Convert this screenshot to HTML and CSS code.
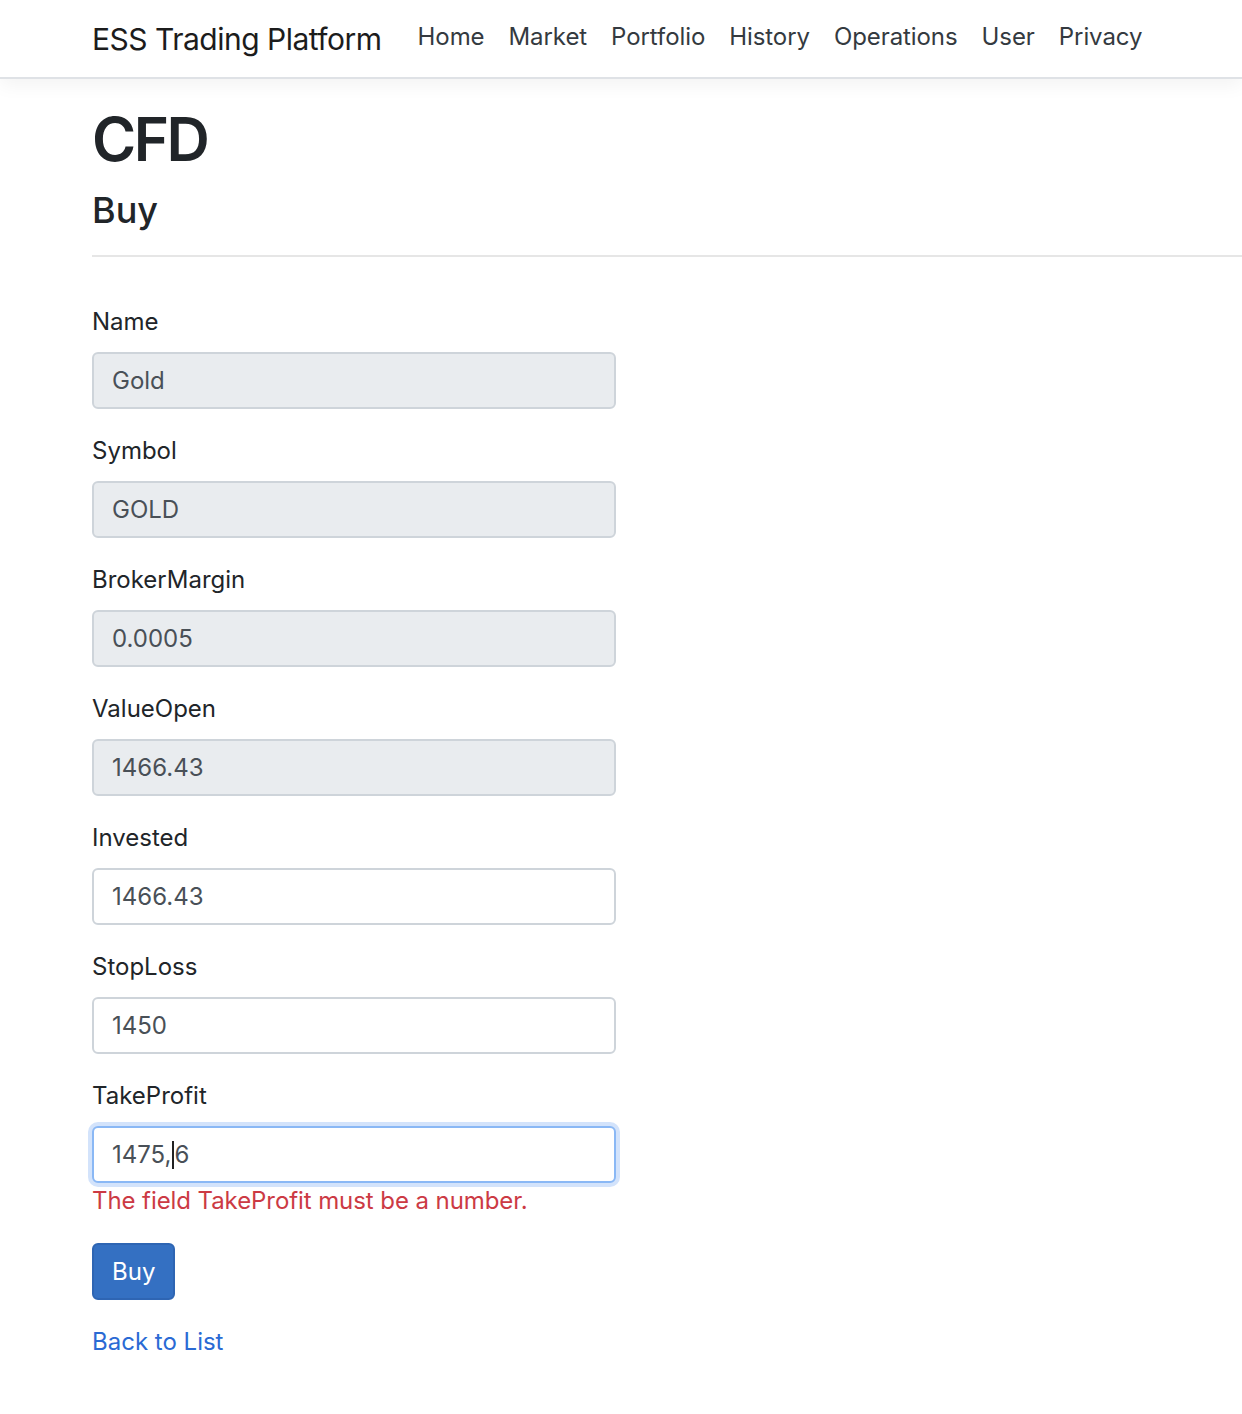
FILE: index.html
```html
<!DOCTYPE html>
<html lang="en">
<head>
<meta charset="utf-8">
<title>Buy - ESS Trading Platform</title>
<link rel="stylesheet" href="styles.css">
</head>
<body>
<header class="navbar">
  <div class="container nav-inner">
    <a class="brand" href="#">ESS Trading Platform</a>
    <nav class="nav-links">
      <a class="nav-link" href="#">Home</a>
      <a class="nav-link" href="#">Market</a>
      <a class="nav-link" href="#">Portfolio</a>
      <a class="nav-link" href="#">History</a>
      <a class="nav-link" href="#">Operations</a>
      <a class="nav-link" href="#">User</a>
      <a class="nav-link" href="#">Privacy</a>
    </nav>
  </div>
</header>
<main class="container main">
  <h1 class="title">CFD</h1>
  <h4 class="subtitle">Buy</h4>
  <hr class="divider">
  <form class="form">
    <div class="form-group">
      <label class="label">Name</label>
      <input class="form-control" type="text" value="Gold" readonly>
    </div>
    <div class="form-group">
      <label class="label">Symbol</label>
      <input class="form-control" type="text" value="GOLD" readonly>
    </div>
    <div class="form-group">
      <label class="label">BrokerMargin</label>
      <input class="form-control" type="text" value="0.0005" readonly>
    </div>
    <div class="form-group">
      <label class="label">ValueOpen</label>
      <input class="form-control" type="text" value="1466.43" readonly>
    </div>
    <div class="form-group">
      <label class="label">Invested</label>
      <input class="form-control editable" type="text" value="1466.43">
    </div>
    <div class="form-group">
      <label class="label">StopLoss</label>
      <input class="form-control editable" type="text" value="1450">
    </div>
    <div class="form-group">
      <label class="label">TakeProfit</label>
      <div class="form-control editable focused"><span>1475,</span><span class="caret"></span><span>6</span></div>
      <span class="text-danger">The field TakeProfit must be a number.</span>
    </div>
    <div class="form-group">
      <button class="btn-primary" type="button">Buy</button>
    </div>
  </form>
  <div class="back"><a class="link" href="#">Back to List</a></div>
</main>
</body>
</html>
```
FILE: styles.css
```css
* { box-sizing: border-box; }
html, body { margin: 0; padding: 0; }
body {
  font-family: "Inter", "Liberation Sans", sans-serif;
  font-size: 24px;
  line-height: 36px;
  color: #212529;
  background: #fff;
}
.container { padding-left: 92px; }
.navbar {
  height: 79px;
  border-bottom: 2px solid #dfe2e6;
  box-shadow: 0 6px 18px rgba(0,0,0,0.05);
  background: #fff;
}
.nav-inner {
  display: flex;
  align-items: center;
  height: 77px;
}
.brand {
  font-size: 30px;
  color: #1c1c1c;
  text-decoration: none;
  margin-right: 24px;
  letter-spacing: -0.5px;
}
.nav-links { display: flex; padding-bottom: 4px; }
.nav-link {
  padding: 0 12px;
  color: #343a40;
  text-decoration: none;
  letter-spacing: -0.08px;
}
.main { padding-top: 24px; }
.title {
  font-size: 60px;
  line-height: 72px;
  font-weight: 600;
  margin: 0 0 14px 0;
  letter-spacing: -2.5px;
}
.subtitle {
  font-size: 36px;
  line-height: 43px;
  font-weight: 500;
  margin: 0;
}
.divider {
  border: 0;
  border-top: 2px solid #e6e6e6;
  margin: 23px 0 47px 0;
}
.form { width: 524px; }
.form-group {
  display: flex;
  flex-direction: column;
  margin-bottom: 24px;
}
.label {
  display: block;
  margin-bottom: 12px;
}
.form-control {
  display: block;
  width: 524px;
  height: 57px;
  padding: 9px 18px;
  font: inherit;
  color: #495057;
  background: #e9ecef;
  border: 2px solid #ced4da;
  border-radius: 6px;
  outline: none;
}
.form-control.editable { background: #fff; }
.form-control.focused {
  border-color: #8ab8f5;
  box-shadow: 0 0 0 4px #d3e3fb;
  display: flex;
  align-items: center;
}
.caret {
  display: inline-block;
  width: 2px;
  height: 28px;
  background: #222;
  margin: 0 0 0 1px;
}
.text-danger { color: #cc3a44; letter-spacing: -0.08px; }
.btn-primary {
  align-self: flex-start;
  font: inherit;
  color: #fff;
  background: #3470c2;
  border: 2px solid #2e65b3;
  border-radius: 6px;
  padding: 9px 18px;
  height: 57px;
  cursor: pointer;
}
.back { line-height: 36px; }
.link { color: #2a6ad4; text-decoration: none; }
```
